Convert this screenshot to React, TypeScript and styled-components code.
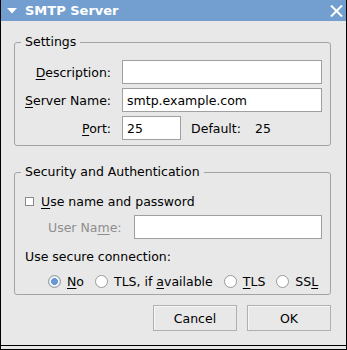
import styled, { createGlobalStyle } from "styled-components";

const GlobalStyle = createGlobalStyle`
  html, body {
    margin: 0;
    padding: 0;
    background: #ffffff;
  }
  body {
    font-family: "DejaVu Sans", "Liberation Sans", sans-serif;
    font-size: 12.5px;
    color: #000000;
  }
`;

const Window = styled.div`
  box-sizing: border-box;
  width: 347px;
  height: 350px;
  display: flex;
  flex-direction: column;
  background: #e8e8e8;
  border: 1px solid #000000;
  border-top: none;
`;

const TitleBar = styled.div`
  height: 21px;
  flex: none;
  display: flex;
  align-items: center;
  padding: 0 3px 0 6px;
  background: #729fcf;
  color: #ffffff;
`;

const Title = styled.div`
  flex: 1;
  margin-left: 8px;
  font-size: 13px;
  font-weight: bold;
  line-height: 21px;
`;

const Body = styled.div`
  flex: 1;
  display: flex;
  flex-direction: column;
  padding: 14px 15px 0 13px;
  border-bottom: 1px solid #000000;
`;

const BottomEdge = styled.div`
  height: 3px;
  flex: none;
`;

const Group = styled.fieldset<{ $top: number; $gap?: number }>`
  margin: ${(p) => p.$gap ?? 0}px 0 0 0;
  min-width: 0;
  border: 1px solid #a3a3a3;
  border-radius: 3px;
  padding: ${(p) => p.$top}px 8px 5px 10px;
`;

const Legend = styled.legend`
  padding: 0 4px;
  margin-left: -4px;
  line-height: 14px;
`;

const FormGrid = styled.div`
  display: grid;
  grid-template-columns: auto 1fr;
  column-gap: 11px;
  row-gap: 4px;
  align-items: center;
`;

const Label = styled.label<{ $disabled?: boolean }>`
  text-align: right;
  white-space: nowrap;
  color: ${(p) => (p.$disabled ? "#8e8e8e" : "#000000")};
`;

const U = styled.span`
  text-decoration: underline;
  text-underline-offset: 2px;
`;

const Input = styled.input<{ $width?: number }>`
  box-sizing: border-box;
  height: 24px;
  width: ${(p) => (p.$width ? `${p.$width}px` : "100%")};
  margin: 0;
  padding: 0 4px;
  border: 1px solid #a0a0a0;
  background: #ffffff;
  font: inherit;
  color: #000000;
  outline: none;
`;

const PortRow = styled.div`
  display: flex;
  align-items: center;
`;

const DefaultLabel = styled.span`
  margin-left: 10px;
`;

const DefaultValue = styled.span`
  margin-left: 14px;
`;

const CheckRow = styled.div`
  height: 16px;
  display: flex;
  align-items: center;
  gap: 7px;
`;

const CheckBox = styled.span`
  box-sizing: border-box;
  width: 9px;
  height: 9px;
  border: 1px solid #8a8a8a;
  background: #ffffff;
`;

const UserRow = styled.div`
  margin-top: 6px;
  padding-left: 23px;
  display: flex;
  align-items: center;
  gap: 12px;
`;

const Caption = styled.div`
  margin-top: 10px;
  height: 16px;
  line-height: 16px;
`;

const RadioRow = styled.div`
  margin-top: 8px;
  height: 16px;
  padding-left: 23px;
  display: flex;
  align-items: center;
  gap: 11px;
`;

const RadioItem = styled.label`
  display: flex;
  align-items: center;
  gap: 6px;
  white-space: nowrap;
`;

const RadioCircle = styled.span<{ $checked?: boolean }>`
  box-sizing: border-box;
  width: 13px;
  height: 13px;
  border-radius: 50%;
  border: 1px solid #9a9a9a;
  background: ${(p) =>
    p.$checked
      ? "radial-gradient(circle, #6a98d0 0 3.2px, #ffffff 3.8px 4.6px, #c6d8ee 5.2px)"
      : "#ffffff"};
`;

const ButtonRow = styled.div`
  margin-top: 10px;
  display: flex;
  justify-content: flex-end;
  gap: 10px;
`;

const Button = styled.button`
  box-sizing: border-box;
  width: 84px;
  height: 26px;
  margin: 0;
  padding: 0;
  border: 1px solid #b0b0b0;
  box-shadow: inset 1px 1px 0 #f6f6f6;
  background: #e8e8e8;
  font: inherit;
  color: #000000;
`;

const radios = [
  { key: "no", label: <><U>N</U>o</>, checked: true },
  { key: "tlsa", label: <>TLS, if <U>a</U>vailable</> },
  { key: "tls", label: <><U>T</U>LS</> },
  { key: "ssl", label: <>SS<U>L</U></> },
];

export default function App() {
  return (
    <>
      <GlobalStyle />
      <Window>
        <TitleBar>
          <svg width="10" height="6" viewBox="0 0 10 6">
            <path d="M0 0 H10 L5 5.5 Z" fill="#ffffff" />
          </svg>
          <Title>SMTP Server</Title>
          <svg width="13" height="12" viewBox="0 0 13 12">
            <path
              d="M1 0.5 L12 11.5 M12 0.5 L1 11.5"
              stroke="#ffffff"
              strokeWidth="2"
              fill="none"
            />
          </svg>
        </TitleBar>

        <Body>
          <Group $top={11}>
            <Legend>Settings</Legend>
            <FormGrid>
              <Label>
                <U>D</U>escription:
              </Label>
              <Input defaultValue="" />
              <Label>
                <U>S</U>erver Name:
              </Label>
              <Input defaultValue="smtp.example.com" />
              <Label>
                <U>P</U>ort:
              </Label>
              <PortRow>
                <Input $width={59} defaultValue="25" />
                <DefaultLabel>Default:</DefaultLabel>
                <DefaultValue>25</DefaultValue>
              </PortRow>
            </FormGrid>
          </Group>

          <Group $top={14} $gap={19}>
            <Legend>Security and Authentication</Legend>
            <CheckRow>
              <CheckBox />
              <span>
                <U>U</U>se name and password
              </span>
            </CheckRow>
            <UserRow>
              <Label $disabled>
                User Na<U>m</U>e:
              </Label>
              <Input disabled />
            </UserRow>
            <Caption>Use secure connection:</Caption>
            <RadioRow>
              {radios.map((r) => (
                <RadioItem key={r.key}>
                  <RadioCircle $checked={r.checked} />
                  <span>{r.label}</span>
                </RadioItem>
              ))}
            </RadioRow>
          </Group>

          <ButtonRow>
            <Button>Cancel</Button>
            <Button>OK</Button>
          </ButtonRow>
        </Body>
        <BottomEdge />
      </Window>
    </>
  );
}
